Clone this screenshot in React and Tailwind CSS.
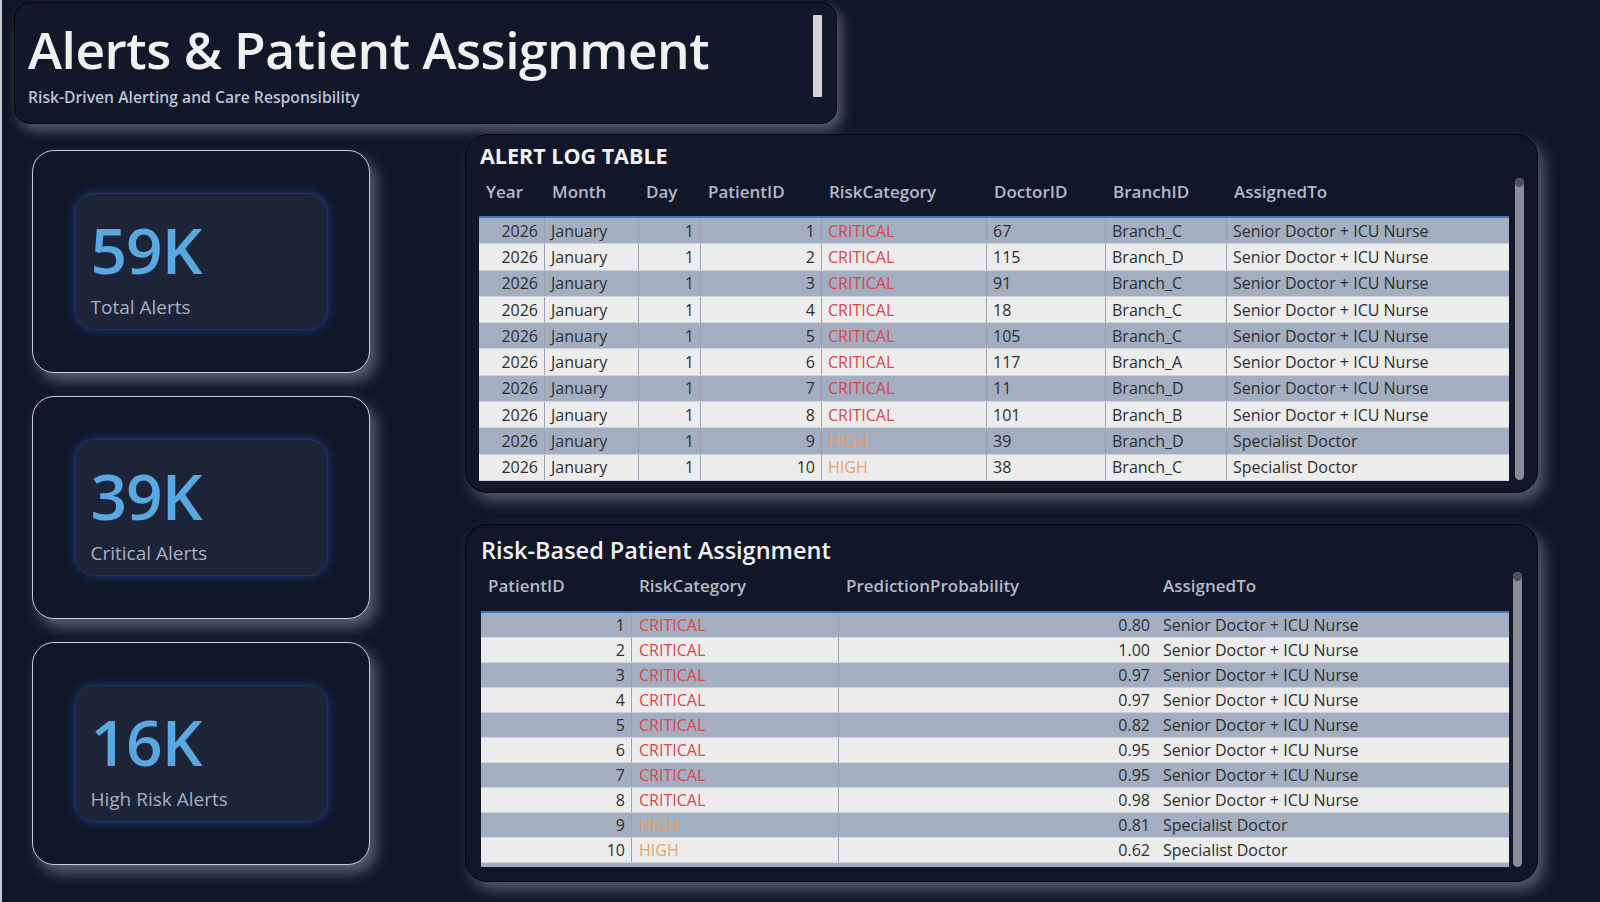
import React from "react";

const FONT = "[font-family:'Open_Sans','Noto_Sans',sans-serif]";

const alertRows = [
  [2026, "January", 1, 1, "CRITICAL", 67, "Branch_C", "Senior Doctor + ICU Nurse"],
  [2026, "January", 1, 2, "CRITICAL", 115, "Branch_D", "Senior Doctor + ICU Nurse"],
  [2026, "January", 1, 3, "CRITICAL", 91, "Branch_C", "Senior Doctor + ICU Nurse"],
  [2026, "January", 1, 4, "CRITICAL", 18, "Branch_C", "Senior Doctor + ICU Nurse"],
  [2026, "January", 1, 5, "CRITICAL", 105, "Branch_C", "Senior Doctor + ICU Nurse"],
  [2026, "January", 1, 6, "CRITICAL", 117, "Branch_A", "Senior Doctor + ICU Nurse"],
  [2026, "January", 1, 7, "CRITICAL", 11, "Branch_D", "Senior Doctor + ICU Nurse"],
  [2026, "January", 1, 8, "CRITICAL", 101, "Branch_B", "Senior Doctor + ICU Nurse"],
  [2026, "January", 1, 9, "HIGH", 39, "Branch_D", "Specialist Doctor"],
  [2026, "January", 1, 10, "HIGH", 38, "Branch_C", "Specialist Doctor"],
];

const assignRows = [
  [1, "CRITICAL", "0.80", "Senior Doctor + ICU Nurse"],
  [2, "CRITICAL", "1.00", "Senior Doctor + ICU Nurse"],
  [3, "CRITICAL", "0.97", "Senior Doctor + ICU Nurse"],
  [4, "CRITICAL", "0.97", "Senior Doctor + ICU Nurse"],
  [5, "CRITICAL", "0.82", "Senior Doctor + ICU Nurse"],
  [6, "CRITICAL", "0.95", "Senior Doctor + ICU Nurse"],
  [7, "CRITICAL", "0.95", "Senior Doctor + ICU Nurse"],
  [8, "CRITICAL", "0.98", "Senior Doctor + ICU Nurse"],
  [9, "HIGH", "0.81", "Specialist Doctor"],
  [10, "HIGH", "0.62", "Specialist Doctor"],
];

function Risk({ v }) {
  return (
    <span className={v === "CRITICAL" ? "text-[#d9464f]" : "text-[#e8a26c]"}>{v}</span>
  );
}

function Kpi({ value, label }) {
  return (
    <div className="w-[338px] h-[223px] rounded-[22px] border-[1.5px] border-[#c9cdd6] bg-[#111729] shadow-[6px_8px_14px_rgba(150,155,170,0.55)] flex items-center justify-center">
      <div className="w-[253px] h-[137px] rounded-[20px] bg-[#1d2438] border border-[#1f3358] shadow-[0_0_10px_rgba(35,80,170,0.65)] flex flex-col pl-[15px] pt-[24px]">
        <div className="text-[64px] leading-[64px] font-semibold text-[#5aa8e2] tracking-[-1px]">{value}</div>
        <div className="mt-[13px] text-[19px] leading-[24px] text-[#a6afc2]">{label}</div>
      </div>
    </div>
  );
}

function ScrollBar({ h }) {
  return (
    <div className={`w-[9px] rounded-full bg-[#8a8d97] flex flex-col items-center ${h}`}>
      <div className="w-[9px] h-[9px] rounded-full bg-[#4d515b]" />
    </div>
  );
}

const alertCols = [
  { w: "w-[66px]", r: true, label: "Year" },
  { w: "w-[94px]", r: false, label: "Month" },
  { w: "w-[62px]", r: true, label: "Day" },
  { w: "w-[121px]", r: true, label: "PatientID" },
  { w: "w-[165px]", r: false, label: "RiskCategory" },
  { w: "w-[119px]", r: false, label: "DoctorID" },
  { w: "w-[121px]", r: false, label: "BranchID" },
  { w: "w-[282px]", r: false, label: "AssignedTo" },
];

const assignCols = [
  { w: "w-[151px]", r: true, label: "PatientID", sep: true },
  { w: "w-[207px]", r: false, label: "RiskCategory", sep: true },
  { w: "w-[317px]", r: true, label: "PredictionProbability", sep: false },
  { w: "w-[353px]", r: false, label: "AssignedTo", sep: false },
];

function AlertTable() {
  return (
    <div className="w-[1073px] h-[359px] rounded-[22px] border border-[#04060c] bg-[#111729] shadow-[6px_8px_14px_rgba(150,155,170,0.5)] flex flex-col pl-[13px] pt-[7px]">
      <div className="text-[21.5px] leading-[28px] font-bold text-[#f2f2f2] pl-[1px]">ALERT LOG TABLE</div>
      <div className="flex mt-[4px]">
        <div className="w-[1030px] flex flex-col">
          <div className="flex h-[36px] items-center">
            {alertCols.map((c) => (
              <div key={c.label} className={`${c.w} pl-[7px] text-[17px] font-semibold text-[#b3bac8] whitespace-nowrap`}>
                {c.label}
              </div>
            ))}
          </div>
          <div className="mt-[6px] h-[265px] overflow-hidden border-t-2 border-[#3d74c4]">
            {alertRows.map((row, i) => (
              <div
                key={i}
                className={`flex h-[26.3px] items-center border-b border-[#cdd2da] text-[16px] text-[#2e2e2e] ${i % 2 === 0 ? "bg-[#a3aec0]" : "bg-[#ececec]"}`}
              >
                {row.map((v, j) => (
                  <div
                    key={j}
                    className={`${alertCols[j].w} h-full flex items-center whitespace-nowrap ${j < 7 ? "border-r border-[#9ba3b1]" : ""} ${alertCols[j].r ? "justify-end pr-[6px]" : "pl-[6px]"}`}
                  >
                    {j === 4 ? <Risk v={v} /> : v}
                  </div>
                ))}
              </div>
            ))}
            <div className="flex h-[26px] bg-[#a3aec0]">
              {alertCols.map((c, j) => (
                <div key={j} className={`${c.w} h-full ${j < 7 ? "border-r border-[#9ba3b1]" : ""}`} />
              ))}
            </div>
          </div>
        </div>
        <div className="ml-[6px] mt-[4px]">
          <ScrollBar h="h-[302px]" />
        </div>
      </div>
    </div>
  );
}

function AssignTable() {
  return (
    <div className="w-[1073px] h-[358px] rounded-[22px] border border-[#04060c] bg-[#111729] shadow-[6px_8px_14px_rgba(150,155,170,0.5)] flex flex-col pl-[15px] pt-[10px]">
      <div className="text-[23.5px] leading-[30px] font-semibold text-[#f2f2f2]">Risk-Based Patient Assignment</div>
      <div className="flex mt-[3px]">
        <div className="w-[1028px] flex flex-col">
          <div className="flex h-[36px] items-center">
            {assignCols.map((c) => (
              <div key={c.label} className={`${c.w} pl-[7px] text-[17px] font-semibold text-[#b3bac8] whitespace-nowrap`}>
                {c.label}
              </div>
            ))}
          </div>
          <div className="mt-[7px] h-[256px] overflow-hidden border-t-2 border-[#3d74c4]">
            {assignRows.map((row, i) => (
              <div
                key={i}
                className={`flex h-[25px] items-center border-b border-[#cdd2da] text-[16px] text-[#2e2e2e] ${i % 2 === 0 ? "bg-[#a3aec0]" : "bg-[#ececec]"}`}
              >
                {row.map((v, j) => (
                  <div
                    key={j}
                    className={`${assignCols[j].w} h-full flex items-center whitespace-nowrap ${assignCols[j].sep ? "border-r border-[#9ba3b1]" : ""} ${assignCols[j].r ? "justify-end pr-[6px]" : "pl-[7px]"}`}
                  >
                    {j === 1 ? <Risk v={v} /> : v}
                  </div>
                ))}
              </div>
            ))}
            <div className="flex h-[25px] bg-[#a3aec0]">
              {assignCols.map((c, j) => (
                <div key={j} className={`${c.w} h-full ${c.sep ? "border-r border-[#9ba3b1]" : ""}`} />
              ))}
            </div>
          </div>
        </div>
        <div className="ml-[4px] mt-[4px]">
          <ScrollBar h="h-[295px]" />
        </div>
      </div>
    </div>
  );
}

export default function App() {
  return (
    <div className={`${FONT} w-[1600px] h-[902px] bg-[#111729] border-l-2 border-[#c3c7cf] overflow-hidden flex flex-col`}>
      <div className="ml-[12px] mt-[2px] w-[823px] h-[122px] rounded-[16px] border border-[#04060c] bg-[#121829] shadow-[5px_7px_12px_rgba(150,155,170,0.5)] flex items-start justify-between pl-[13px] pr-[14px]">
        <div className="flex flex-col pt-[16px]">
          <div className="text-[51.5px] leading-[60px] font-semibold text-[#f1f1f1] tracking-[-0.5px] whitespace-nowrap">
            Alerts &amp; Patient Assignment
          </div>
          <div className="mt-[8px] text-[15.7px] leading-[20px] font-semibold text-[#bcc4d4] whitespace-nowrap">
            Risk-Driven Alerting and Care Responsibility
          </div>
        </div>
        <div className="mt-[12px] w-[9px] h-[82px] bg-[#d4d4d6] rounded-[1px]" />
      </div>

      <div className="flex">
        <div className="ml-[30px] mt-[26px] flex flex-col gap-[23px]">
          <Kpi value="59K" label="Total Alerts" />
          <Kpi value="39K" label="Critical Alerts" />
          <Kpi value="16K" label="High Risk Alerts" />
        </div>
        <div className="ml-[95px] mt-[10px] flex flex-col gap-[31px]">
          <AlertTable />
          <AssignTable />
        </div>
      </div>
    </div>
  );
}
